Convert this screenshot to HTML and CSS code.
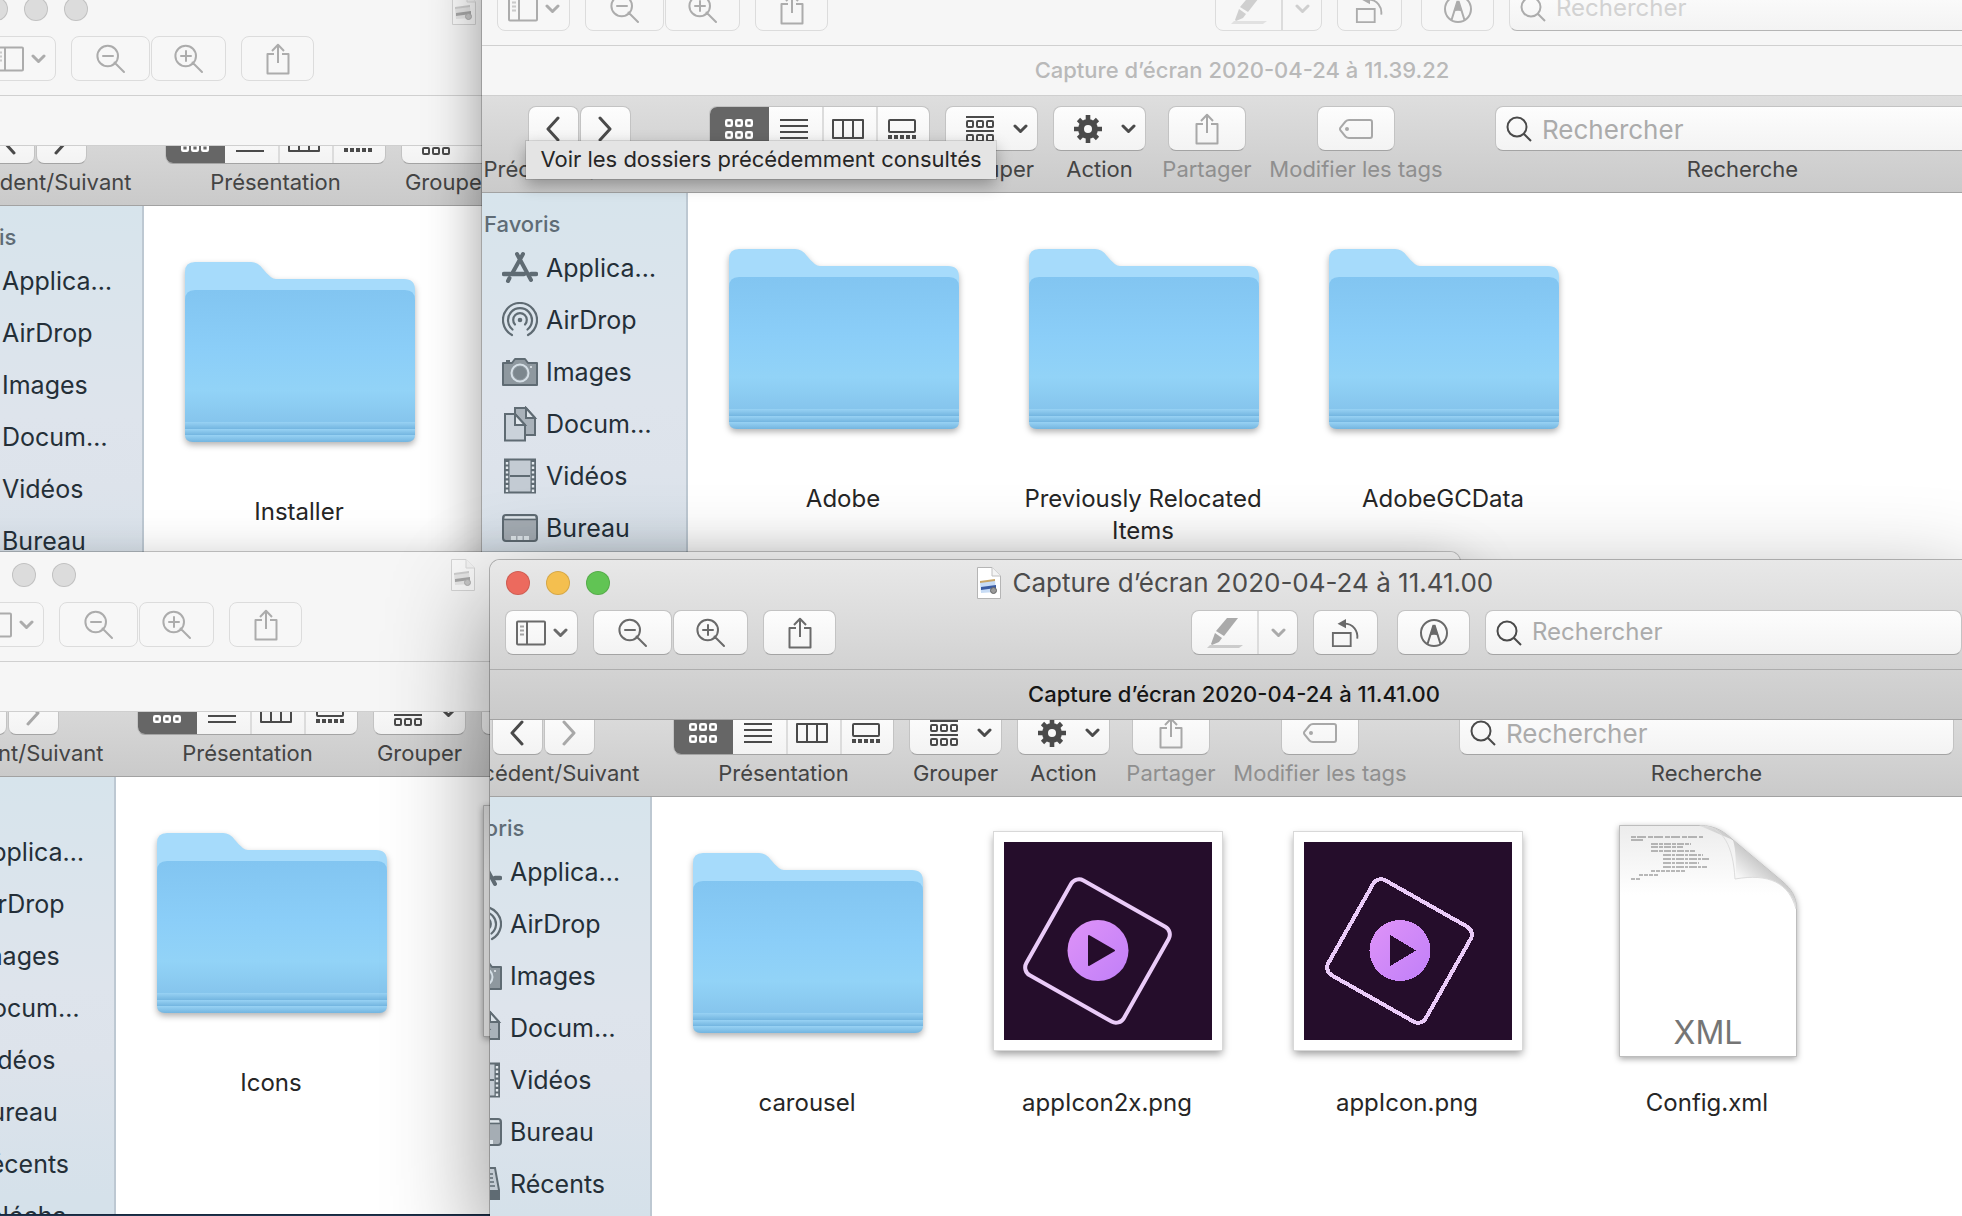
FILE: index.html
```html
<!DOCTYPE html>
<html lang="fr">
<head>
<meta charset="utf-8">
<title>Captures d’écran</title>
<link rel="stylesheet" href="styles.css">
</head>
<body>

<svg class="defs" aria-hidden="true">
  <defs>
    <linearGradient id="folder-front" x1="0" y1="0" x2="0" y2="1">
      <stop offset="0" stop-color="#82c5f1"/><stop offset=".45" stop-color="#8bcef8"/>
      <stop offset=".75" stop-color="#92d3f7"/><stop offset="1" stop-color="#85c4ec"/>
    </linearGradient>
    <linearGradient id="folder-band" x1="0" y1="0" x2="0" y2="1">
      <stop offset="0" stop-color="#98d2f4"/><stop offset="1" stop-color="#73b5e0"/>
    </linearGradient>
    <linearGradient id="play-fill" x1="0" y1="0" x2="1" y2="1">
      <stop offset="0" stop-color="#df93f8"/><stop offset="1" stop-color="#c07ff8"/>
    </linearGradient>
    <linearGradient id="page-fill" x1="0" y1="0" x2="0" y2="1">
      <stop offset="0" stop-color="#ececec"/><stop offset=".3" stop-color="#fff"/><stop offset="1" stop-color="#fff"/>
    </linearGradient>
    <linearGradient id="curl-fill" x1="0" y1="1" x2="1" y2="0">
      <stop offset="0" stop-color="#fff"/><stop offset=".4" stop-color="#f6f6f6"/><stop offset=".6" stop-color="#c8c8c8"/><stop offset="1" stop-color="#eee"/>
    </linearGradient>
  </defs>

  <symbol id="i-panel" viewBox="0 0 30 25"><g fill="none" stroke="currentColor" stroke-width="2"><rect x="1" y="1" width="28" height="23" rx="1"/><path d="M11 1V24"/><path d="M4 6H8M4 10H8M4 14H8" opacity=".6"/></g></symbol>
  <symbol id="i-down" viewBox="0 0 15 10"><path d="M2 2L7.500 7.500L13 2" fill="none" stroke="currentColor" stroke-width="3" stroke-linecap="round" stroke-linejoin="round"/></symbol>
  <symbol id="i-zoom-out" viewBox="0 0 30 30"><path d="M18.500 18.500L28 28M7 12H17M22 12A10.300 10.300 0 1 1 1.400 12A10.300 10.300 0 1 1 22 12Z" fill="none" stroke="currentColor" stroke-width="2" stroke-linecap="round"/></symbol>
  <symbol id="i-zoom-in" viewBox="0 0 30 30"><path d="M18.500 18.500L28 28M7 12H17M12 7V17M22 12A10.300 10.300 0 1 1 1.400 12A10.300 10.300 0 1 1 22 12Z" fill="none" stroke="currentColor" stroke-width="2" stroke-linecap="round"/></symbol>
  <symbol id="i-share" viewBox="0 0 24 32"><path d="M8 11H1.500V30.500H22.500V11H16M12 20V2M6 8L12 1.800L18 8" fill="none" stroke="currentColor" stroke-width="2" stroke-linejoin="round"/></symbol>
  <symbol id="i-marker" viewBox="0 0 36 32"><g fill="currentColor"><path d="M20 1H31L17 19L9 14Z"/><path d="M8 16L15 21L12 25L5 28L4 27Z"/><path d="M3 28H36L32 31H0Z" opacity=".55"/></g></symbol>
  <symbol id="i-rotate" viewBox="0 0 30 32"><path d="M1 16H20V30H1ZM13 6C23 6 28 14 27 22" fill="none" stroke="currentColor" stroke-width="2"/><path d="M6 6L15 1V11Z" fill="currentColor"/></symbol>
  <symbol id="i-markup" viewBox="0 0 30 30"><circle cx="15" cy="15" r="13" fill="none" stroke="currentColor" stroke-width="2"/><path d="M15 6L19.500 17.500C17 16.500 13 16.500 10.500 17.500Z" fill="currentColor"/><path d="M14.500 7L8.500 26M15.500 7L21.500 26" stroke="currentColor" stroke-width="2"/></symbol>
  <symbol id="i-search" viewBox="0 0 26 26"><path d="M17.500 17.500L25 25M20.500 11A9.500 9.500 0 1 1 1.500 11A9.500 9.500 0 1 1 20.500 11Z" fill="none" stroke="currentColor" stroke-width="2"/></symbol>
  <symbol id="i-left" viewBox="0 0 16 26"><path d="M13 2L3 13L13 24" fill="none" stroke="currentColor" stroke-width="3" stroke-linecap="round" stroke-linejoin="round"/></symbol>
  <symbol id="i-right" viewBox="0 0 16 26"><path d="M3 2L13 13L3 24" fill="none" stroke="currentColor" stroke-width="3" stroke-linecap="round" stroke-linejoin="round"/></symbol>
  <symbol id="i-grid" viewBox="0 0 28 20"><g fill="none" stroke="currentColor" stroke-width="2.400"><rect x="1.200" y="1.200" width="5.600" height="5.600" rx="1"/><rect x="11.200" y="1.200" width="5.600" height="5.600" rx="1"/><rect x="21.200" y="1.200" width="5.600" height="5.600" rx="1"/><rect x="1.200" y="13.200" width="5.600" height="5.600" rx="1"/><rect x="11.200" y="13.200" width="5.600" height="5.600" rx="1"/><rect x="21.200" y="13.200" width="5.600" height="5.600" rx="1"/></g></symbol>
  <symbol id="i-list" viewBox="0 0 28 20"><path d="M0 1H28M0 7H28M0 13H28M0 19H28" stroke="currentColor" stroke-width="2"/></symbol>
  <symbol id="i-columns" viewBox="0 0 32 20"><path d="M1 1H31V19H1ZM11 1V19M21 1V19" fill="none" stroke="currentColor" stroke-width="2" stroke-linejoin="round"/></symbol>
  <symbol id="i-gallery" viewBox="0 0 28 20"><rect x="1" y="1" width="26" height="12" rx="1" fill="none" stroke="currentColor" stroke-width="2"/><path d="M0 18H28" stroke="currentColor" stroke-width="4" stroke-dasharray="4 2"/></symbol>
  <symbol id="i-group" viewBox="0 0 28 28"><g fill="none" stroke="currentColor" stroke-width="2"><path d="M0 2H28M0 16H28"/><rect x="1" y="6" width="6" height="6" rx="1"/><rect x="11" y="6" width="6" height="6" rx="1"/><rect x="21" y="6" width="6" height="6" rx="1"/><rect x="1" y="20" width="6" height="6" rx="1"/><rect x="11" y="20" width="6" height="6" rx="1"/><rect x="21" y="20" width="6" height="6" rx="1"/></g></symbol>
  <symbol id="i-gear" viewBox="0 0 28 28"><g fill="none" stroke="currentColor"><circle cx="14" cy="14" r="7" stroke-width="6"/><path d="M14 0V6M14 22V28M0 14H6M22 14H28M4.500 4.500L8.500 8.500M19.500 19.500L23.500 23.500M4.500 23.500L8.500 19.500M19.500 8.500L23.500 4.500" stroke-width="4.600"/></g></symbol>
  <symbol id="i-tag" viewBox="0 0 34 20"><path d="M10 1H31Q33 1 33 3V17Q33 19 31 19H10Q8 19 6.500 17.500L1.500 11.500Q.5 10 1.500 8.500L6.500 2.500Q8 1 10 1Z" fill="none" stroke="currentColor" stroke-width="2"/><circle cx="8" cy="10" r="2" fill="currentColor"/></symbol>

  <symbol id="s-apps" viewBox="0 0 36 36"><g fill="none" stroke="currentColor" stroke-width="4" stroke-linecap="round"><path d="M15 4L29 30M21 4L11 22M7.500 28L6 31"/><path d="M2 24H22M29 24H34" stroke-width="4.500"/></g></symbol>
  <symbol id="s-airdrop" viewBox="0 0 36 36"><g fill="none" stroke="currentColor" stroke-width="2.200" stroke-linecap="round"><path d="M10 33A17 17 0 1 1 26 33"/><path d="M10.500 27.500A12 12 0 1 1 25.500 27.500"/><path d="M13 22.500A6.800 6.800 0 1 1 23 22.500"/></g><circle cx="18" cy="18" r="2.300" fill="currentColor"/></symbol>
  <symbol id="s-camera" viewBox="0 0 36 36"><path d="M1 9H10L13 5H23L26 9H35V31H1Z" fill="#8e989f" stroke="currentColor" stroke-width="2" stroke-linejoin="round"/><path d="M4 7H8" stroke="currentColor" stroke-width="2"/><circle cx="18" cy="19" r="8.500" fill="#8e989f" stroke="#d5dfe6" stroke-width="2"/><circle cx="18" cy="19" r="6.500" fill="#7c878e"/><circle cx="29" cy="13" r="1" fill="#e8eef2"/></symbol>
  <symbol id="s-docs" viewBox="0 0 36 36"><g stroke="currentColor" stroke-width="2"><path d="M13 2H24L33 12V29H13Z" fill="#a9b2ba"/><path d="M24 2V12H33Z" fill="#dde4ea"/><path d="M3 8H13L23 19V34.500H3Z" fill="#cad2da"/><path d="M13 8V19H23Z" fill="#e3e9ee"/></g></symbol>
  <symbol id="s-film" viewBox="0 0 36 36"><path d="M3 1.500H33V34.500H3Z" fill="#c3cbd3" stroke="currentColor" stroke-width="2"/><path d="M8 18H28" stroke="currentColor" stroke-width="2"/><path d="M5 2V34M31 2V34" stroke="currentColor" stroke-width="5"/><path d="M5 4V34M31 4V34" stroke="#e3e9ee" stroke-width="2.400" stroke-dasharray="2.400 2.200"/></symbol>
  <symbol id="s-desktop" viewBox="0 0 36 36"><rect x="1" y="5" width="34" height="26" rx="3" fill="#a5adb4" stroke="currentColor" stroke-width="2"/><path d="M3 7.500H33" stroke="#dfe6eb" stroke-width="2.500"/><path d="M2 9.500H34" stroke="currentColor" stroke-width="1.500"/><path d="M9 28H28" stroke="#dfe6eb" stroke-width="4" stroke-dasharray="5 1.500"/></symbol>
  <symbol id="s-recents" viewBox="0 0 36 36"><path d="M7 2H29L33 24V33H3V24Z" fill="#c3cbd3" stroke="currentColor" stroke-width="2"/><path d="M10 8H27M10 12H27M9 16H28M9 20H29" stroke="currentColor" stroke-width="1.500"/><path d="M3 24H33V33H3Z" fill="currentColor"/></symbol>

  <symbol id="doc-small" viewBox="0 0 24 32"><path d="M.5.500H15L23.500 9V31.500H.5Z" fill="#fff" stroke="#b5b5b5"/><path d="M15 .500V9H23.500" fill="#f4f4f4" stroke="#c0c0c0"/><path d="M3 15L18 13L19 25L4 26Z" fill="#c8dcf5"/><path d="M3 14L18 12V14L3 16Z" fill="#c9a566"/><path d="M4 20L19 18V21L4 23Z" fill="#3b5ca3"/><circle cx="16.500" cy="23.500" r="3" fill="#9a9a9a" stroke="#666"/></symbol>

  <symbol id="folder" viewBox="0 0 230 180"><path d="M0 10Q0 0 10 0H66Q73 0 78 7Q86 17 91 17H219Q230 17 230 28V100H0Z" fill="#a6dbfb"/><path d="M0 38Q0 28 10 28H220Q230 28 230 38V162H0Z" fill="url(#folder-front)"/><path d="M0 160H230V167H0Z" fill="url(#folder-band)"/><path d="M0 167H230V173H0Z" fill="url(#folder-band)"/><path d="M0 173H230Q230 180 222 180H8Q0 180 0 173Z" fill="url(#folder-band)"/></symbol>

  <symbol id="page" viewBox="0 0 178 232"><path d="M.5.500H80C98 .500 106 8 114 15L164 57C172 64 177.500 72 177.500 84V231.500H.5Z" fill="url(#page-fill)" stroke="#bdbdbd"/><path d="M80 .500C98 .500 106 8 114 15C117 25 117 40 117 54C150 48 170 58 177.500 84C177.500 72 172 64 164 57L114 15" fill="url(#curl-fill)"/><path d="M86 1C104 4 114 20 116 54C150 48 170 58 177 84" fill="none" stroke="#dcdcdc"/><g stroke="#777" stroke-width="1"><path d="M12 12H84" stroke-dasharray="5 1 9 2"/><path d="M12 15H24"/><path d="M32 19H72M32 22H64M32 26H76" stroke-dasharray="7 1 4 1"/><path d="M44 30H84M44 34H90M44 38H80M44 42H88" stroke-dasharray="8 1 3 1"/><path d="M32 46H66M20 50H40M12 54H22" stroke-dasharray="4 1"/></g></symbol>
</svg>

<main class="desktop">

  <!-- Window: top left -->
  <section class="window window-a inactive">
    <header class="titlebar">
      <span class="lights"><i></i><i></i><i></i></span>
      <svg class="doc-icon"><use href="#doc-small"/></svg>
    </header>
    <div class="preview-tools">
      <button class="btn menu" aria-label="Présentation"><svg class="w30"><use href="#i-panel"/></svg><svg class="w15"><use href="#i-down"/></svg></button>
      <div class="pair"><button class="btn zo" aria-label="Réduire"><svg class="w30"><use href="#i-zoom-out"/></svg></button><button class="btn zi" aria-label="Agrandir"><svg class="w30"><use href="#i-zoom-in"/></svg></button></div>
      <button class="btn sq" aria-label="Partager"><svg class="w24"><use href="#i-share"/></svg></button>
    </div>
    <div class="tabbar"></div>
    <div class="shot">
      <div class="finder">
        <div class="tools">
          <div class="tool t-nav"><div class="pair"><button class="btn nav" aria-label="Précédent"><svg class="w16"><use href="#i-left"/></svg></button><button class="btn nav" aria-label="Suivant"><svg class="w16"><use href="#i-right"/></svg></button></div><span>Précédent/Suivant</span></div>
          <div class="tool t-view"><div class="seg"><button class="on" aria-label="Icônes"><svg class="w28"><use href="#i-grid"/></svg></button><button aria-label="Liste"><svg class="w28"><use href="#i-list"/></svg></button><button aria-label="Colonnes"><svg class="w32"><use href="#i-columns"/></svg></button><button aria-label="Galerie"><svg class="w28"><use href="#i-gallery"/></svg></button></div><span>Présentation</span></div>
          <div class="tool t-menu"><button class="btn drop" aria-label="Grouper"><svg class="w28"><use href="#i-group"/></svg><svg class="w15"><use href="#i-down"/></svg></button><span>Grouper</span></div>
        </div>
        <div class="body">
          <nav class="side">
            <h2>Favoris</h2>
            <ul>
              <li><a href="#"><svg><use href="#s-apps"/></svg>Applica…</a></li>
              <li><a href="#"><svg><use href="#s-airdrop"/></svg>AirDrop</a></li>
              <li><a href="#"><svg><use href="#s-camera"/></svg>Images</a></li>
              <li><a href="#"><svg><use href="#s-docs"/></svg>Docum…</a></li>
              <li><a href="#"><svg><use href="#s-film"/></svg>Vidéos</a></li>
              <li><a href="#"><svg><use href="#s-desktop"/></svg>Bureau</a></li>
            </ul>
          </nav>
          <div class="files">
            <figure><div class="slot"><svg class="folder"><use href="#folder"/></svg></div><figcaption>Installer</figcaption></figure>
          </div>
        </div>
      </div>
    </div>
  </section>

  <!-- Window: top right -->
  <section class="window window-b inactive">
    <header class="titlebar">
      <span class="lights"><i></i><i></i><i></i></span>
    </header>
    <div class="preview-tools">
      <button class="btn menu" aria-label="Présentation"><svg class="w30"><use href="#i-panel"/></svg><svg class="w15"><use href="#i-down"/></svg></button>
      <div class="pair"><button class="btn zo" aria-label="Réduire"><svg class="w30"><use href="#i-zoom-out"/></svg></button><button class="btn zi" aria-label="Agrandir"><svg class="w30"><use href="#i-zoom-in"/></svg></button></div>
      <button class="btn sq" aria-label="Partager"><svg class="w24"><use href="#i-share"/></svg></button>
      <div class="split"><button class="pen" aria-label="Surligner"><svg class="w36"><use href="#i-marker"/></svg></button><button class="arrow" aria-label="Couleurs"><svg class="w15"><use href="#i-down"/></svg></button></div>
      <button class="btn rotate" aria-label="Pivoter"><svg class="w30"><use href="#i-rotate"/></svg></button>
      <button class="btn sq markup" aria-label="Annoter"><svg class="w30"><use href="#i-markup"/></svg></button>
      <label class="search"><svg class="w26"><use href="#i-search"/></svg><input type="search" placeholder="Rechercher" aria-label="Rechercher"></label>
    </div>
    <div class="tabbar">Capture d’écran 2020-04-24 à 11.39.22</div>
    <div class="shot">
      <div class="finder">
        <div class="tools">
          <div class="tool t-nav"><div class="pair"><button class="btn nav" aria-label="Précédent"><svg class="w16"><use href="#i-left"/></svg></button><button class="btn nav" aria-label="Suivant"><svg class="w16"><use href="#i-right"/></svg></button></div><span>Précédent/Suivant</span></div>
          <div class="tool t-view"><div class="seg"><button class="on" aria-label="Icônes"><svg class="w28"><use href="#i-grid"/></svg></button><button aria-label="Liste"><svg class="w28"><use href="#i-list"/></svg></button><button aria-label="Colonnes"><svg class="w32"><use href="#i-columns"/></svg></button><button aria-label="Galerie"><svg class="w28"><use href="#i-gallery"/></svg></button></div><span>Présentation</span></div>
          <div class="tool t-menu"><button class="btn drop" aria-label="Grouper"><svg class="w28"><use href="#i-group"/></svg><svg class="w15"><use href="#i-down"/></svg></button><span>Grouper</span></div>
          <div class="tool t-menu"><button class="btn drop" aria-label="Action"><svg class="w28"><use href="#i-gear"/></svg><svg class="w15"><use href="#i-down"/></svg></button><span>Action</span></div>
          <div class="tool t-share off"><button class="btn wide" aria-label="Partager"><svg class="w24"><use href="#i-share"/></svg></button><span>Partager</span></div>
          <div class="tool t-tags off"><button class="btn wide" aria-label="Modifier les tags"><svg class="w34"><use href="#i-tag"/></svg></button><span>Modifier les tags</span></div>
          <div class="tool t-search"><label class="search"><svg class="w26"><use href="#i-search"/></svg><input type="search" placeholder="Rechercher" aria-label="Recherche"></label><span>Recherche</span></div>
        </div>
        <div class="body">
          <nav class="side">
            <h2>Favoris</h2>
            <ul>
              <li><a href="#"><svg><use href="#s-apps"/></svg>Applica…</a></li>
              <li><a href="#"><svg><use href="#s-airdrop"/></svg>AirDrop</a></li>
              <li><a href="#"><svg><use href="#s-camera"/></svg>Images</a></li>
              <li><a href="#"><svg><use href="#s-docs"/></svg>Docum…</a></li>
              <li><a href="#"><svg><use href="#s-film"/></svg>Vidéos</a></li>
              <li><a href="#"><svg><use href="#s-desktop"/></svg>Bureau</a></li>
            </ul>
          </nav>
          <div class="files">
            <figure><div class="slot"><svg class="folder"><use href="#folder"/></svg></div><figcaption>Adobe</figcaption></figure>
            <figure><div class="slot"><svg class="folder"><use href="#folder"/></svg></div><figcaption>Previously Relocated Items</figcaption></figure>
            <figure><div class="slot"><svg class="folder"><use href="#folder"/></svg></div><figcaption>AdobeGCData</figcaption></figure>
          </div>
        </div>
        <div class="tooltip" role="tooltip">Voir les dossiers précédemment consultés</div>
      </div>
    </div>
  </section>

  <!-- Window: bottom left -->
  <section class="window window-c inactive">
    <header class="titlebar">
      <span class="lights"><i></i><i></i><i></i></span>
      <svg class="doc-icon"><use href="#doc-small"/></svg>
    </header>
    <div class="preview-tools">
      <button class="btn menu" aria-label="Présentation"><svg class="w30"><use href="#i-panel"/></svg><svg class="w15"><use href="#i-down"/></svg></button>
      <div class="pair"><button class="btn zo" aria-label="Réduire"><svg class="w30"><use href="#i-zoom-out"/></svg></button><button class="btn zi" aria-label="Agrandir"><svg class="w30"><use href="#i-zoom-in"/></svg></button></div>
      <button class="btn sq" aria-label="Partager"><svg class="w24"><use href="#i-share"/></svg></button>
    </div>
    <div class="tabbar"></div>
    <div class="shot">
      <div class="finder">
        <div class="tools">
          <div class="tool t-nav"><div class="pair"><button class="btn nav" aria-label="Précédent"><svg class="w16"><use href="#i-left"/></svg></button><button class="btn nav dim" aria-label="Suivant"><svg class="w16"><use href="#i-right"/></svg></button></div><span>Précédent/Suivant</span></div>
          <div class="tool t-view"><div class="seg"><button class="on" aria-label="Icônes"><svg class="w28"><use href="#i-grid"/></svg></button><button aria-label="Liste"><svg class="w28"><use href="#i-list"/></svg></button><button aria-label="Colonnes"><svg class="w32"><use href="#i-columns"/></svg></button><button aria-label="Galerie"><svg class="w28"><use href="#i-gallery"/></svg></button></div><span>Présentation</span></div>
          <div class="tool t-menu"><button class="btn drop" aria-label="Grouper"><svg class="w28"><use href="#i-group"/></svg><svg class="w15"><use href="#i-down"/></svg></button><span>Grouper</span></div>
          <div class="tool t-menu"><button class="btn drop" aria-label="Action"></button></div>
        </div>
        <div class="body">
          <nav class="side">
            <h2>Favoris</h2>
            <ul>
              <li><a href="#"><svg><use href="#s-apps"/></svg>Applica…</a></li>
              <li><a href="#"><svg><use href="#s-airdrop"/></svg>AirDrop</a></li>
              <li><a href="#"><svg><use href="#s-camera"/></svg>Images</a></li>
              <li><a href="#"><svg><use href="#s-docs"/></svg>Docum…</a></li>
              <li><a href="#"><svg><use href="#s-film"/></svg>Vidéos</a></li>
              <li><a href="#"><svg><use href="#s-desktop"/></svg>Bureau</a></li>
              <li><a href="#"><svg><use href="#s-recents"/></svg>Récents</a></li>
              <li><a href="#"><svg><use href="#s-recents"/></svg>Télécha…</a></li>
            </ul>
          </nav>
          <div class="files">
            <figure><div class="slot"><svg class="folder"><use href="#folder"/></svg></div><figcaption>Icons</figcaption></figure>
            <figure><div class="slot"><svg class="page"><use href="#page"/></svg></div></figure>
          </div>
        </div>
      </div>
    </div>
  </section>

  <!-- Window: front -->
  <section class="window window-d">
    <header class="titlebar">
      <span class="lights"><i class="red"></i><i class="yellow"></i><i class="green"></i></span>
      <svg class="doc-icon"><use href="#doc-small"/></svg>
      <h1>Capture d’écran 2020-04-24 à 11.41.00</h1>
    </header>
    <div class="preview-tools">
      <button class="btn menu" aria-label="Présentation"><svg class="w30"><use href="#i-panel"/></svg><svg class="w15"><use href="#i-down"/></svg></button>
      <div class="pair"><button class="btn zo" aria-label="Réduire"><svg class="w30"><use href="#i-zoom-out"/></svg></button><button class="btn zi" aria-label="Agrandir"><svg class="w30"><use href="#i-zoom-in"/></svg></button></div>
      <button class="btn sq" aria-label="Partager"><svg class="w24"><use href="#i-share"/></svg></button>
      <div class="split"><button class="pen" aria-label="Surligner"><svg class="w36"><use href="#i-marker"/></svg></button><button class="arrow" aria-label="Couleurs"><svg class="w15"><use href="#i-down"/></svg></button></div>
      <button class="btn rotate" aria-label="Pivoter"><svg class="w30"><use href="#i-rotate"/></svg></button>
      <button class="btn sq markup" aria-label="Annoter"><svg class="w30"><use href="#i-markup"/></svg></button>
      <label class="search"><svg class="w26"><use href="#i-search"/></svg><input type="search" placeholder="Rechercher" aria-label="Rechercher"></label>
    </div>
    <div class="tabbar">Capture d’écran 2020-04-24 à 11.41.00</div>
    <div class="shot">
      <div class="finder">
        <div class="tools">
          <div class="tool t-nav"><div class="pair"><button class="btn nav" aria-label="Précédent"><svg class="w16"><use href="#i-left"/></svg></button><button class="btn nav dim" aria-label="Suivant"><svg class="w16"><use href="#i-right"/></svg></button></div><span>Précédent/Suivant</span></div>
          <div class="tool t-view"><div class="seg"><button class="on" aria-label="Icônes"><svg class="w28"><use href="#i-grid"/></svg></button><button aria-label="Liste"><svg class="w28"><use href="#i-list"/></svg></button><button aria-label="Colonnes"><svg class="w32"><use href="#i-columns"/></svg></button><button aria-label="Galerie"><svg class="w28"><use href="#i-gallery"/></svg></button></div><span>Présentation</span></div>
          <div class="tool t-menu"><button class="btn drop" aria-label="Grouper"><svg class="w28"><use href="#i-group"/></svg><svg class="w15"><use href="#i-down"/></svg></button><span>Grouper</span></div>
          <div class="tool t-menu"><button class="btn drop" aria-label="Action"><svg class="w28"><use href="#i-gear"/></svg><svg class="w15"><use href="#i-down"/></svg></button><span>Action</span></div>
          <div class="tool t-share off"><button class="btn wide" aria-label="Partager"><svg class="w24"><use href="#i-share"/></svg></button><span>Partager</span></div>
          <div class="tool t-tags off"><button class="btn wide" aria-label="Modifier les tags"><svg class="w34"><use href="#i-tag"/></svg></button><span>Modifier les tags</span></div>
          <div class="tool t-search"><label class="search"><svg class="w26"><use href="#i-search"/></svg><input type="search" placeholder="Rechercher" aria-label="Recherche"></label><span>Recherche</span></div>
        </div>
        <div class="body">
          <nav class="side">
            <h2>Favoris</h2>
            <ul>
              <li><a href="#"><svg><use href="#s-apps"/></svg>Applica…</a></li>
              <li><a href="#"><svg><use href="#s-airdrop"/></svg>AirDrop</a></li>
              <li><a href="#"><svg><use href="#s-camera"/></svg>Images</a></li>
              <li><a href="#"><svg><use href="#s-docs"/></svg>Docum…</a></li>
              <li><a href="#"><svg><use href="#s-film"/></svg>Vidéos</a></li>
              <li><a href="#"><svg><use href="#s-desktop"/></svg>Bureau</a></li>
              <li><a href="#"><svg><use href="#s-recents"/></svg>Récents</a></li>
            </ul>
          </nav>
          <div class="files">
            <figure><div class="slot"><svg class="folder"><use href="#folder"/></svg></div><figcaption>carousel</figcaption></figure>
            <figure><div class="slot"><svg class="thumb" viewBox="0 0 208 198"><rect width="208" height="198" fill="#250d2b"/><rect x="37.500" y="54.500" width="112" height="109" rx="9" transform="rotate(29.500 93.500 109)" fill="none" stroke="#eacbf8" stroke-width="4"/><circle cx="94" cy="108.500" r="30.500" fill="url(#play-fill)"/><path d="M85 94L110 108.500L85 123Z" fill="#250d2b" stroke="#250d2b" stroke-width="2" stroke-linejoin="round"/></svg></div><figcaption>appIcon2x.png</figcaption></figure>
            <figure><div class="slot"><svg class="thumb" viewBox="0 0 208 198"><rect width="208" height="198" fill="#250d2b"/><g shape-rendering="crispEdges"><rect x="39.500" y="54.500" width="112" height="109" rx="9" transform="rotate(29.500 95.500 109)" fill="none" stroke="#eacbf8" stroke-width="4"/><circle cx="96" cy="108.500" r="30.500" fill="url(#play-fill)"/><path d="M86 93L112 108.500L86 124Z" fill="#250d2b"/></g></svg></div><figcaption>appIcon.png</figcaption></figure>
            <figure><div class="slot doc"><svg class="page"><use href="#page"/></svg><span class="kind">XML</span></div><figcaption>Config.xml</figcaption></figure>
          </div>
        </div>
      </div>
    </div>
  </section>

</main>
</body>
</html>
```

FILE: styles.css
```css
* { box-sizing: border-box; }

body {
  margin: 0;
  font-family: Inter, "Liberation Sans", sans-serif;
  color: #262626;
}

.defs { position: absolute; width: 0; height: 0; }

.desktop {
  position: relative;
  height: 100vh;
  overflow: hidden;
  background: #2b4a70;
}

/* Windows, placed freely on the desktop */
.window {
  position: absolute;
  display: flex;
  flex-direction: column;
  overflow: hidden;
  border-radius: 10px 10px 0 0;
  background: #fff;
  box-shadow: 0 0 0 1px rgba(0, 0, 0, .25), 0 36px 100px rgba(0, 0, 0, .45);
}
.window.inactive { box-shadow: 0 0 0 1px rgba(0, 0, 0, .2), 0 20px 56px rgba(0, 0, 0, .4); }
.window-a { left: -32px; right: 512px; top: -14px; bottom: 600px; }
.window-b { left: 482px; right: -40px; top: -64px; bottom: 600px; }
.window-c { left: -44px; right: 502px; top: 552px; bottom: 2px; }
.window-d { left: 490px; right: -16px; top: 560px; bottom: 0; }

/* Title bar */
.titlebar {
  display: grid;
  grid-template-columns: 1fr 24px 479px 1fr;
  column-gap: 12px;
  align-items: center;
  flex: none;
  height: 50px;
  padding: 0 16px 5px;
  background: linear-gradient(#e8e8e8, #dedede);
}
.lights { display: flex; gap: 16px; }
.lights i { width: 24px; height: 24px; border-radius: 50%; border: 1px solid rgba(0, 0, 0, .12); }
.lights .red { background: #ec6a5e; }
.lights .yellow { background: #f4bf4f; }
.lights .green { background: #61c454; }
.doc-icon { width: 24px; height: 32px; }
h1 {
  margin: 0;
  font-size: 26px;
  font-weight: 400;
  line-height: 32px;
  color: #4c4c4c;
  white-space: nowrap;
}

.preview-tools {
  display: flex;
  gap: 15px;
  flex: none;
  padding: 0 16px 14px 15px;
  border-bottom: 1px solid #adadad;
  background: linear-gradient(#dedede, #d2d2d2);
  color: #6a6a6a;
}
.tabbar {
  flex: none;
  height: 50px;
  border-bottom: 1px solid #a3a3a3;
  background: linear-gradient(#d3d3d3, #cacaca);
  font-size: 22px;
  font-weight: 500;
  line-height: 49px;
  text-align: center;
  color: #161616;
}

/* Buttons */
button {
  padding: 0;
  border: 0;
  background: none;
  color: inherit;
  font: inherit;
  display: flex;
  align-items: center;
  justify-content: center;
}
svg { display: block; flex: none; }
.btn, .split, .seg, .search {
  height: 45px;
  border: 1px solid #c3c3c3;
  border-bottom-color: #a4a4a4;
  border-radius: 8px;
  background: linear-gradient(#fdfdfd, #f3f3f3);
}
.pair { display: flex; gap: 1px; }
.menu { width: 73px; gap: 7px; }
.zo { width: 79px; }
.zi { width: 75px; }
.sq { width: 73px; }
.rotate { width: 65px; }
.markup { margin-left: 4px; }
.split { display: flex; width: 107px; margin-left: auto; color: #aaa; }
.split .pen { flex: 1; border-right: 2px solid #dcdcdc; }
.split .arrow { width: 38px; }
.search { display: flex; align-items: center; gap: 10px; padding: 0 10px; color: #4a4a4a; }
.preview-tools .search { flex: 0 0 477px; }
.search input {
  flex: 1;
  min-width: 0;
  padding: 0 0 2px;
  border: 0;
  outline: 0;
  background: none;
  font: 24px/30px Inter, "Liberation Sans", sans-serif;
  appearance: none;
}
.search input::placeholder { color: #ababab; opacity: 1; }

.w15 { width: 15px; height: 10px; }
.w16 { width: 16px; height: 26px; }
.w24 { width: 24px; height: 32px; }
.w26 { width: 26px; height: 26px; }
.w28 { width: 28px; height: 28px; }
.w30 { width: 30px; height: 30px; }
.w32 { width: 32px; height: 20px; }
.w34 { width: 34px; height: 20px; }
.w36 { width: 36px; height: 32px; }

/* Unfocused chrome */
.inactive .titlebar, .inactive .preview-tools, .inactive .tabbar { background: #f6f6f6; }
.inactive .preview-tools { border-bottom-color: #d0d0d0; color: #acacac; }
.inactive .tabbar { border-bottom-color: #cfcfcf; color: #b9b9b9; }
.inactive .lights i { background: #dcdcdc; }
.inactive .doc-icon { filter: grayscale(1); opacity: .5; }
.inactive .preview-tools .btn, .inactive .preview-tools .split { border-color: #dcdcdc; background: #f7f7f7; }
.inactive .split { color: #cfcfcf; }
.inactive .preview-tools .search { border-color: #dcdcdc; border-bottom-color: #b5b5b5; color: #acacac; }
.inactive .preview-tools input::placeholder { color: #d2d2d2; }

/* Finder picture inside each window, cropped by the window */
.shot { flex: 1; min-height: 0; overflow: hidden; display: flex; flex-direction: column; }
.finder { position: relative; flex: 1 0 auto; display: flex; flex-direction: column; }
.window-a .finder { margin: -37px 0 0 -50px; }
.window-b .finder { margin: 0 -12px 0 -20px; }
.window-c .finder { margin: -32px 0 0 -66px; }
.window-d .finder { margin: -20px 0 0 -64px; }

.tools {
  display: flex;
  flex: none;
  height: 97px;
  padding: 10px 24px 0 22px;
  border-bottom: 1px solid #a2a2a2;
  background: linear-gradient(#dedede, #cacaca);
  color: #4a4a4a;
}
.tool { display: flex; flex-direction: column; align-items: center; flex: none; }
.tool span {
  margin-top: 4px;
  font-size: 22px;
  line-height: 28px;
  white-space: nowrap;
  color: #444;
}
.off { color: #a8a8a8; }
.off span { color: #8f8f8f; }
.t-nav { width: 191px; }
.t-view { margin-left: 34px; width: 221px; }
.t-menu { margin-left: 15px; width: 93px; }
.t-share { margin-left: 16px; width: 90px; }
.t-tags { margin-left: 17px; width: 174px; }
.t-search { margin-left: 52px; flex: 1; }
.t-search .search { width: 100%; }
.t-search input { padding: 2px 0 0; font-size: 26px; }
.nav { width: 51px; padding-right: 2px; }
.nav.dim { color: #a8a8a8; }
.drop { width: 93px; gap: 19px; padding-left: 10px; }
.wide { width: 78px; }
.seg { display: grid; grid-template-columns: 59px 53px 54px 1fr; width: 221px; overflow: hidden; }
.seg button + button { padding-right: 4px; }
.seg button + button + button { border-left: 2px solid #dcdcdc; }
.seg .on { margin: -1px 0 -1px -1px; background: #666; color: #fff; }

.body { display: flex; flex: 1; background: #fff; }
.side {
  flex: none;
  width: 226px;
  padding-top: 17px;
  border-right: 2px solid #bdc8d2;
  background: linear-gradient(#d7e4ec, #dee4ec 210px, #dde3eb 280px, #d5e1ea 420px);
}
.side h2 {
  margin: 0 0 4px;
  padding-left: 22px;
  font-size: 22px;
  font-weight: 500;
  line-height: 28px;
  color: #5f6c76;
}
.side ul { margin: 0; padding: 0; list-style: none; }
.side a {
  display: flex;
  align-items: center;
  gap: 8px;
  height: 52px;
  padding-left: 40px;
  font-size: 25px;
  line-height: 32px;
  white-space: nowrap;
  text-decoration: none;
  color: #242f38;
}
.side svg { width: 36px; height: 36px; color: #5f6b73; }

.files { display: flex; padding: 28px 0 0 6px; }
figure { flex: none; width: 300px; margin: 0; }
.slot { display: flex; align-items: center; justify-content: center; height: 232px; }
.folder { width: 230px; height: 180px; margin-top: 4px; filter: drop-shadow(0 3px 3px rgba(0, 0, 0, .3)); }
.thumb {
  box-sizing: content-box;
  width: 208px;
  height: 198px;
  border: 10px solid #fff;
  outline: 1px solid #d8d8d8;
  box-shadow: 0 4px 8px rgba(0, 0, 0, .4);
}
.page { width: 178px; height: 232px; filter: drop-shadow(0 2px 3px rgba(0, 0, 0, .35)); }
.doc { display: grid; justify-items: center; }
.doc > * { grid-area: 1 / 1; }
.kind { z-index: 1; align-self: end; padding-bottom: 4px; font-size: 32px; line-height: 40px; color: #757575; }
figcaption {
  padding: 30px 22px 0 20px;
  font-size: 24px;
  line-height: 32px;
  text-align: center;
}

.tooltip {
  position: absolute;
  left: 64px;
  top: 45px;
  width: 470px;
  height: 38px;
  background: #e4e4e4;
  box-shadow: 0 0 0 1px rgba(0, 0, 0, .1), 0 6px 16px rgba(0, 0, 0, .3);
  font-size: 22px;
  line-height: 36px;
  text-align: center;
  white-space: nowrap;
}
```
